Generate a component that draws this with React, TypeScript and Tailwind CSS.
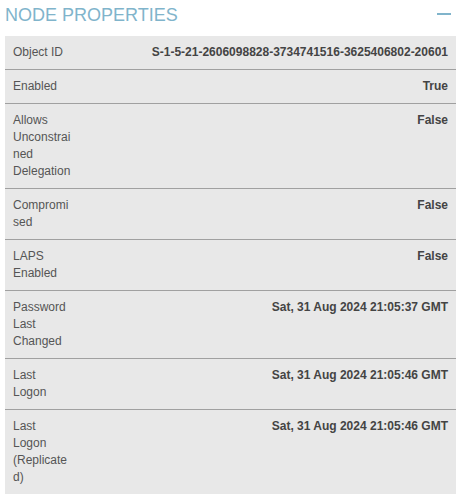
import React from "react";

const rows: [string, string][] = [
  ["Object ID", "S-1-5-21-2606098828-3734741516-3625406802-20601"],
  ["Enabled", "True"],
  ["Allows Unconstrained Delegation", "False"],
  ["Compromised", "False"],
  ["LAPS Enabled", "False"],
  ["Password Last Changed", "Sat, 31 Aug 2024 21:05:37 GMT"],
  ["Last Logon", "Sat, 31 Aug 2024 21:05:46 GMT"],
  ["Last Logon (Replicated)", "Sat, 31 Aug 2024 21:05:46 GMT"],
];

export default function App() {
  return (
    <div className="w-[459px] h-[499px] bg-white pl-[5px] font-['Liberation_Sans',Arial,sans-serif]">
      <div className="w-[451px]">
        <div className="h-[36px] flex items-start justify-between">
          <div className="text-[18px] leading-[20px] text-[#80b4cb] pt-[5px]">NODE PROPERTIES</div>
          <div className="w-[14px] h-[2px] bg-[#80b4cb] mr-[5px] mt-[13px]" />
        </div>
        <div className="bg-[#e8e8e8]">
          {rows.map(([k, v], i) => (
            <div
              key={i}
              className={`flex justify-between gap-2 px-[8px] py-[8px] text-[12px] leading-[17px] ${i > 0 ? "border-t border-[#a0a0a0]" : ""}`}
            >
              <div className="w-[59px] shrink-0 text-[#555] [overflow-wrap:anywhere]">{k}</div>
              <div className="font-bold text-[#444] text-right">{v}</div>
            </div>
          ))}
        </div>
      </div>
    </div>
  );
}
